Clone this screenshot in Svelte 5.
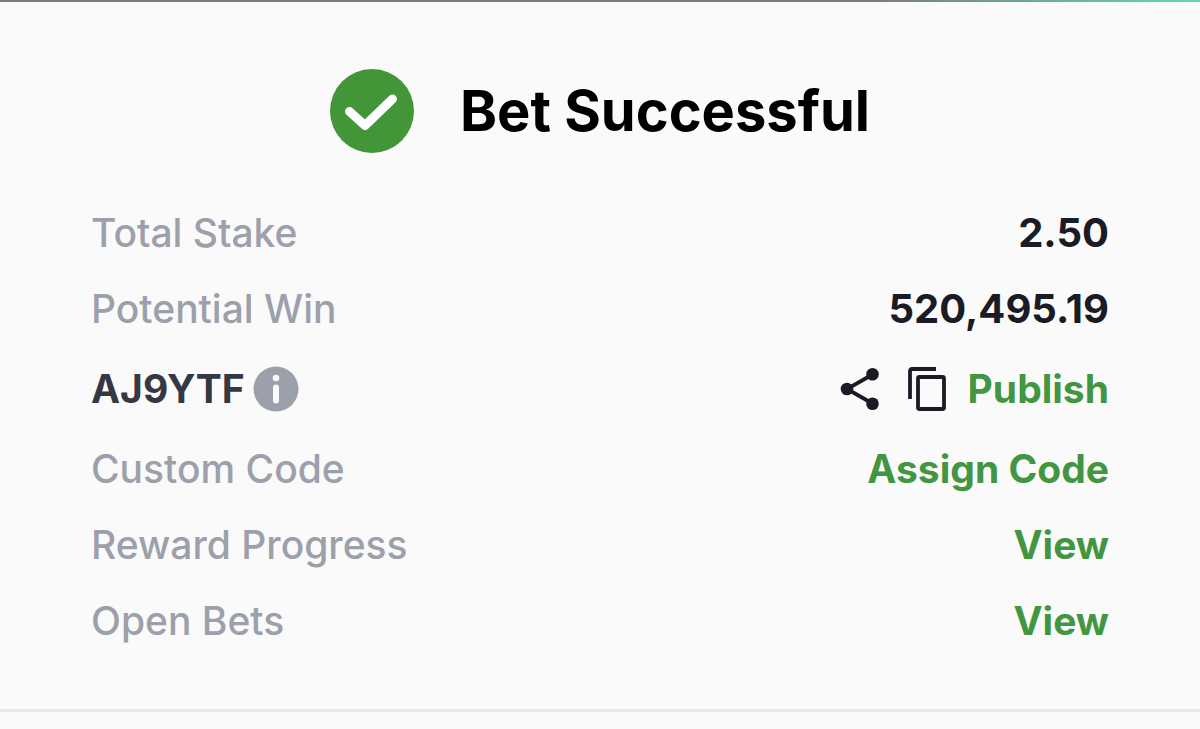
<script>
  const rows = [
    { label: 'Total Stake', value: '2.50' },
    { label: 'Potential Win', value: '520,495.19' },
    { code: 'AJ9YTF', action: 'Publish' },
    { label: 'Custom Code', action: 'Assign Code' },
    { label: 'Reward Progress', action: 'View' },
    { label: 'Open Bets', action: 'View' }
  ];
</script>

<div class="strip"></div>
<main>
  <header>
    <svg class="check" viewBox="0 0 84 84" aria-hidden="true">
      <circle cx="42" cy="42" r="42" fill="#429638" />
      <path d="M19.500 42.500 L35 56.500 L62.500 30" fill="none" stroke="#fff" stroke-width="9" stroke-linecap="round" stroke-linejoin="round" />
    </svg>
    <h1>Bet Successful</h1>
  </header>

  <dl>
    {#each rows as row}
      <div class="row" class:tall={row.code}>
        {#if row.code}
          <dt class="code">
            {row.code}
            <button class="icon" aria-label="About this code">
              <svg width="46" height="46" viewBox="0 0 46 46">
                <circle cx="23" cy="23" r="22.500" fill="#9ca0ab" />
                <circle cx="23" cy="12" r="3.300" fill="#fafafa" />
                <rect x="20" y="18.500" width="6" height="19" rx="3" fill="#fafafa" />
              </svg>
            </button>
          </dt>
        {:else}
          <dt>{row.label}</dt>
        {/if}
        <dd>
          {#if row.code}
            <button class="icon share" aria-label="Share">
              <svg width="40" height="44" viewBox="0 0 40 44">
                <path d="M32.500 7.500 L7 22 L32.500 36.500" fill="none" stroke="#1b1b25" stroke-width="3.800" />
                <g fill="#1b1b25"><circle cx="32.500" cy="7.300" r="6.300" /><circle cx="7" cy="22" r="6.300" /><circle cx="32.500" cy="36.700" r="6.300" /></g>
              </svg>
            </button>
            <button class="icon copy" aria-label="Copy code">
              <svg width="38" height="44" viewBox="0 0 38 44" fill="none" stroke="#1b1b25" stroke-width="3.800">
                <path d="M2 32V4q0-2 2-2h24" />
                <rect x="10" y="10" width="26" height="32" rx="1.500" />
              </svg>
            </button>
          {/if}
          {#if row.action}
            <button class="action">{row.action}</button>
          {:else}
            <span class="value">{row.value}</span>
          {/if}
        </dd>
      </div>
    {/each}
  </dl>
</main>

<style>
  :global(body) { margin: 0; background: #fafafa; }
  .strip { height: 2px; background: linear-gradient(90deg, #7c7a7a 72%, #5fdca5); }
  main {
    padding: 67px 91px 50px;
    border-bottom: 3px solid #e8e8eb;
    font-family: Inter, "Liberation Sans", sans-serif;
    font-size: 39px;
    line-height: 48px;
  }
  header { display: flex; align-items: center; justify-content: center; gap: 46px; }
  .check { width: 84px; height: 84px; }
  h1 { margin: 0; font-size: 56px; line-height: 84px; font-weight: 700; color: #000; }
  dl { margin: 42px 0 0; }
  .row { display: flex; align-items: center; justify-content: space-between; height: 76px; }
  .tall { height: 84px; }
  dt { color: #9ca0ab; font-weight: 500; }
  dd { margin: 0; display: flex; align-items: center; color: #1b1b25; font-weight: 700; }
  .code { display: flex; align-items: center; gap: 8px; color: #343844; font-weight: 700; }
  .value { font-size: 40px; }
  button { padding: 0; border: 0; background: none; font: inherit; cursor: pointer; }
  .icon, .icon svg { display: block; }
  .share { margin-right: 28px; }
  .copy { margin-right: 22px; }
  .action { color: #429641; }
</style>
